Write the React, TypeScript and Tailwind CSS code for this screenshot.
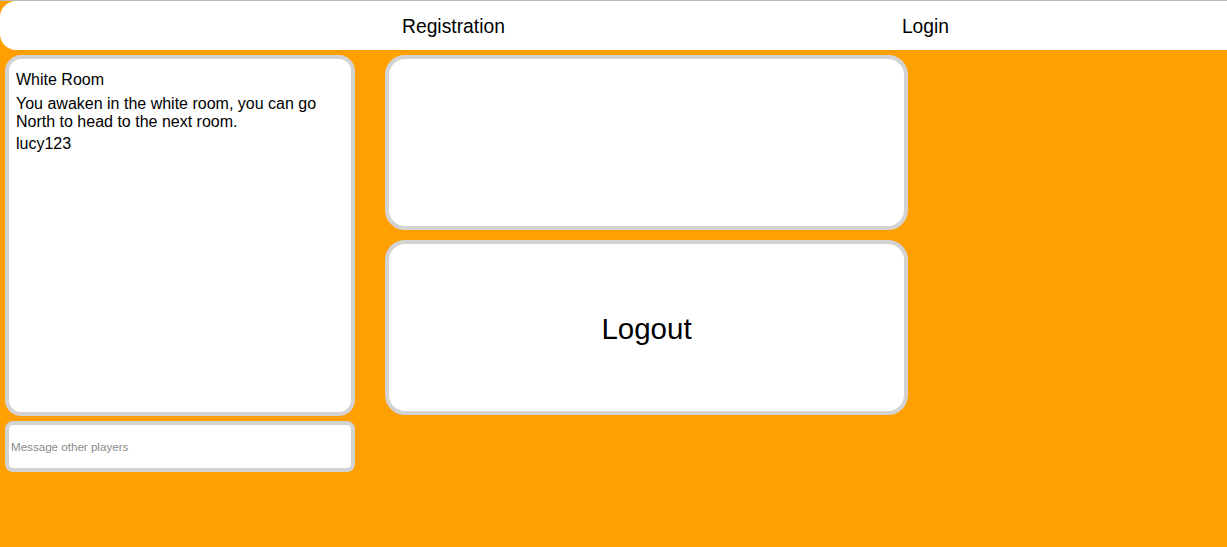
import React from 'react';

const App: React.FC = () => {
  return (
    <div className="min-h-screen w-full bg-[#ff9f00] border-t border-[#bbbbbb] overflow-hidden" style={{ fontFamily: '"Liberation Sans", Arial, sans-serif' }}>
      {/* Nav */}
      <nav className="h-[49px] bg-white rounded-l-[16px] flex items-center pl-[402px] gap-[397px] pt-[4px] text-[19.3px] text-black">
        <a className="cursor-pointer">Registration</a>
        <a className="cursor-pointer">Login</a>
      </nav>

      <div className="flex gap-[30px] pl-[5px] mt-[5px]">
        {/* Room column */}
        <div className="w-[350px] flex flex-col gap-[5px]">
          <div className="h-[361px] bg-white border-4 border-[#d3d3d3] rounded-[16px] px-[7px] pt-[12px] text-[16px] leading-[18px] text-black">
            <div>White Room</div>
            <div className="mt-[6px]">You awaken in the white room, you can go North to head to the next room.</div>
            <div className="mt-[4px]">lucy123</div>
          </div>
          <input
            className="h-[51px] w-full bg-white border-4 border-[#d3d3d3] rounded-[8px] px-[2px] text-[11.6px] text-black placeholder-[#8a8a8a] outline-none"
            placeholder="Message other players"
          />
        </div>

        {/* Middle column */}
        <div className="w-[523px] flex flex-col gap-[10px]">
          <div className="h-[175px] bg-white border-4 border-[#d3d3d3] rounded-[20px]" />
          <button className="h-[175px] bg-white border-4 border-[#d3d3d3] rounded-[20px] flex items-center justify-center pt-[4px] text-[29.5px] text-black">
            Logout
          </button>
        </div>
      </div>
    </div>
  );
};

export default App;
